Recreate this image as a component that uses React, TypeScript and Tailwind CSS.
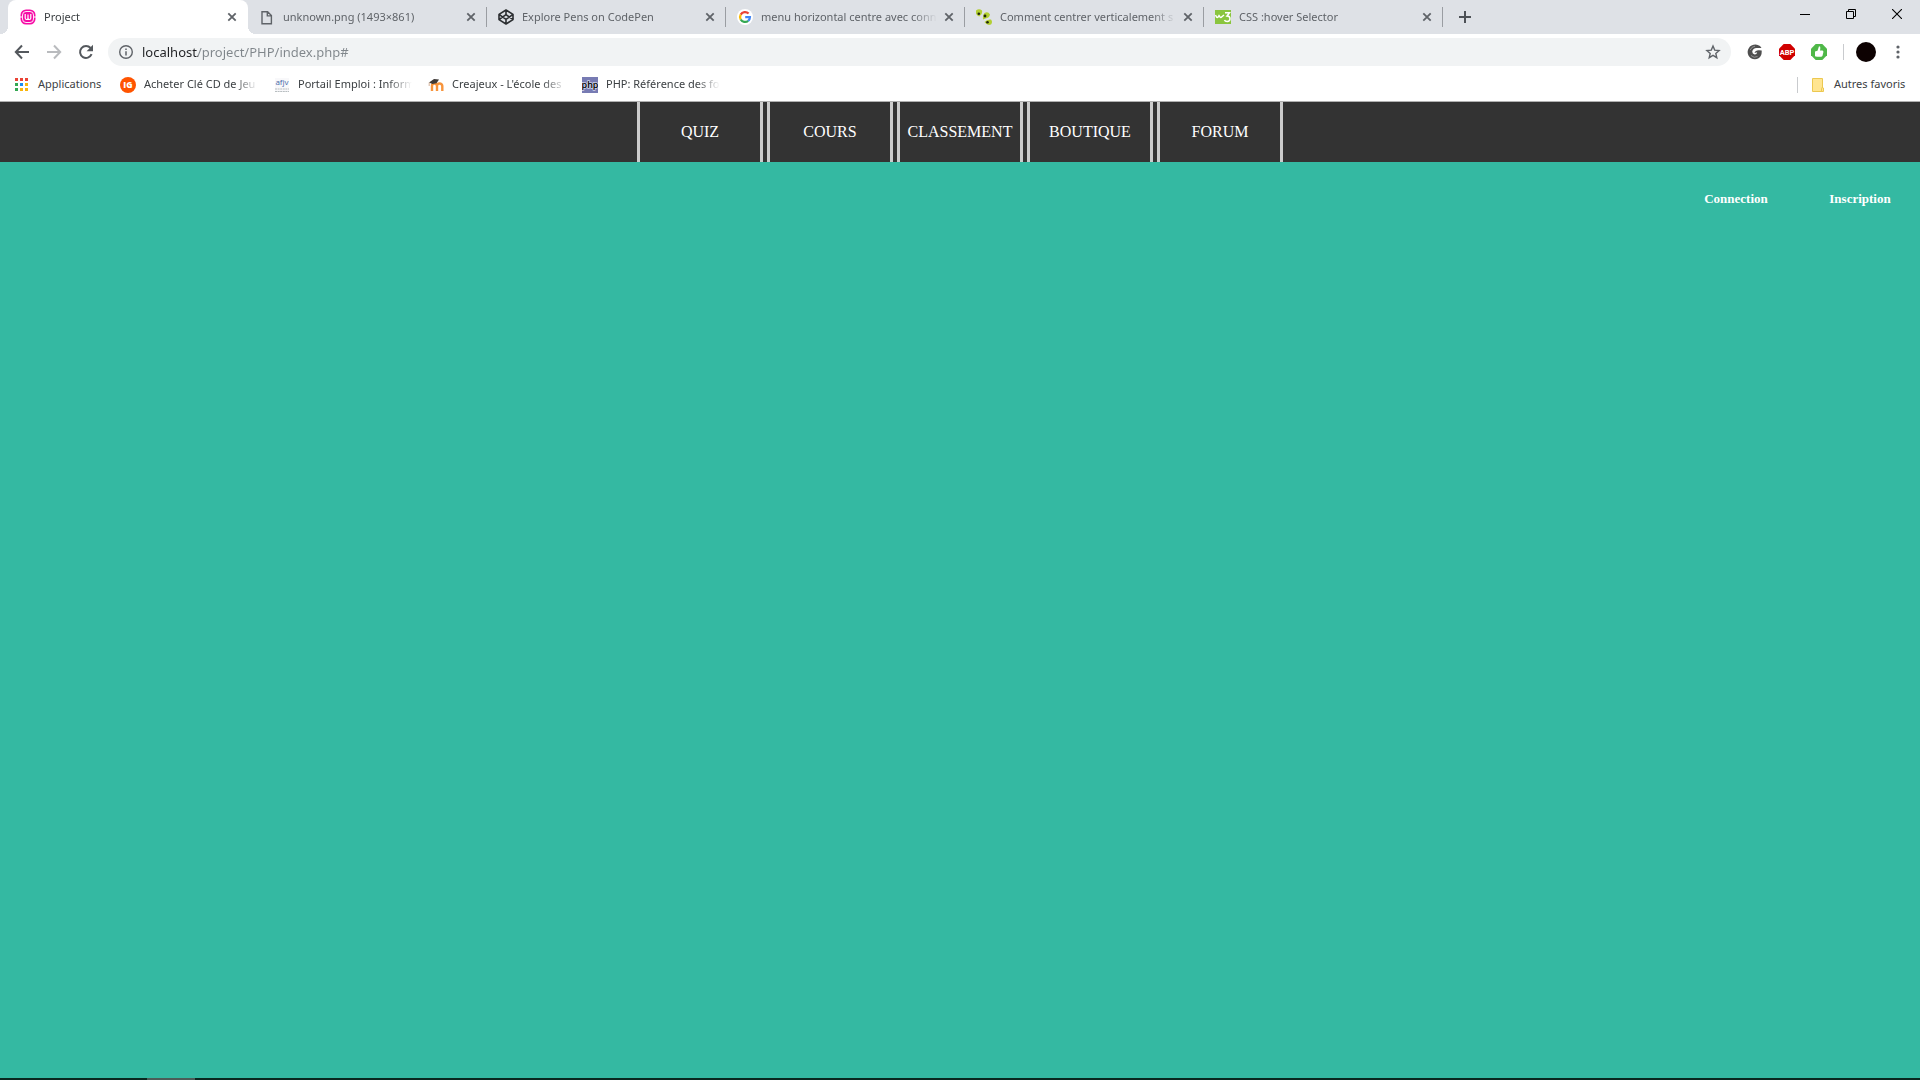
import React from "react";

type Icon = () => React.JSX.Element;

const WampIcon: Icon = () => (
  <svg viewBox="0 0 16 16" className="size-4" aria-hidden="true">
    <rect x="0.5" y="0.5" width="15" height="15" rx="5.5" fill="#f60ba6" />
    <rect x="2.500" y="2.500" width="11" height="11" rx="3.500" fill="none" stroke="#fff" strokeWidth="0.9" />
    <path d="M5.200 5v4q0 1.500 1.400 1.500Q8 10.500 8 9V5.500V9q0 1.500 1.400 1.500Q10.800 10.500 10.800 9V5" fill="none" stroke="#fff" strokeWidth="1.200" />
    <path d="M0 8h2M14 8h2" stroke="#fff" strokeWidth="1" />
  </svg>
);

const FileIcon: Icon = () => (
  <svg viewBox="0 0 16 16" className="size-4" aria-hidden="true">
    <path d="M3 2.700h5.600l3.800 3.900v8.200H3z M8.300 2.700v4.200h4.100" fill="none" stroke="#5f6368" strokeWidth="1.400" />
  </svg>
);

const CodePenIcon: Icon = () => (
  <svg viewBox="0 0 16 16" className="size-4" aria-hidden="true">
    <path d="M8 1l7 4.400v5.200L8 15l-7-4.400V5.400zM8 1v4.600M8 15v-4.600M1 5.400l7 5 7-5M1 10.600l7-5 7 5" fill="none" stroke="#2b2e31" strokeWidth="1.600" strokeLinejoin="round" />
  </svg>
);

const GoogleIcon: Icon = () => (
  <svg viewBox="0 0 16 16" className="size-4" aria-hidden="true">
    <circle cx="8" cy="8" r="8" fill="#fff" />
    <g fill="none" strokeWidth="2.300">
      <path d="M11.600 4.500A5 5 0 0 0 3.700 5.600" stroke="#ea4335" />
      <path d="M3.700 5.600a5 5 0 0 0 0 4.900" stroke="#fbbc05" />
      <path d="M3.700 10.500a5 5 0 0 0 7.500 1.300" stroke="#34a853" />
      <path d="M11.200 11.800A5 5 0 0 0 12.900 8.200H8.200" stroke="#4285f4" />
    </g>
  </svg>
);

const AlsacreationsIcon: Icon = () => (
  <svg viewBox="0 0 16 16" className="size-4" aria-hidden="true">
    <g fill="#b3cf32">
      <path d="M0 1.500Q3-1 6 1.500Q7 5 3.200 7.500Q-1 6 0 1.500z" />
      <path d="M8.500 4Q12 2 14 5.500Q13.500 9 9.500 9.500L7 10.500Q6.500 6 8.500 4z" />
      <path d="M8.500 13Q11 10 15 10.500Q17 13 15 15.500Q11 17 8.500 13z" />
    </g>
    <g fill="#20240c">
      <circle cx="2.800" cy="4.800" r="1.300" />
      <circle cx="9" cy="7" r="1.400" />
      <circle cx="11.500" cy="13.300" r="1.300" />
    </g>
  </svg>
);

const W3Icon: Icon = () => (
  <svg viewBox="0 0 16 16" className="size-4" aria-hidden="true">
    <rect y="1" width="16" height="14" fill="#8ac53e" />
    <path d="M0.500 6l1 2q.8 1 1.600 0L4 6.500l1 1.500q.8 1 1.600 0L9 6" fill="none" stroke="#fff" strokeWidth="1.400" />
    <path d="M10 3.700h4.500L12 7q3 0 3 2.700T12.200 12.500Q10 12.500 9.500 11" fill="none" stroke="#fff" strokeWidth="1.500" />
  </svg>
);

const InstantGamingIcon: Icon = () => (
  <svg viewBox="0 0 16 16" className="size-4" aria-hidden="true">
    <circle cx="8" cy="8" r="8" fill="#ff5400" />
    <text x="8" y="11" textAnchor="middle" fontSize="8.500" fontWeight="800" fontFamily="Open Sans, sans-serif" fill="#fff">IG</text>
  </svg>
);

const AfjvIcon: Icon = () => (
  <svg viewBox="0 0 16 16" className="size-4" aria-hidden="true">
    <rect x="1" y="1" width="14" height="14" fill="#f8f8fa" />
    <text x="8" y="7.500" textAnchor="middle" fontSize="8" fontFamily="Open Sans, sans-serif" fill="#4468a8">afjv</text>
    <path d="M1 12h14M1 14.500h14" stroke="#b8bec0" strokeWidth="1" strokeDasharray="2 .6" />
  </svg>
);

const MoodleIcon: Icon = () => (
  <svg viewBox="0 0 16 16" className="size-4" aria-hidden="true">
    <path d="M4 14V9q0-2.500 2.400-2.500T9 9v5M9 9q0-2.500 2.500-2.500T14.300 9v5" fill="none" stroke="#f7943c" strokeWidth="2.400" />
    <path d="M1 5.500L6 2l5 .6-2.500 3.600-4 .8z" fill="#3f3a38" />
    <path d="M1.200 5.500V9" stroke="#c9a080" strokeWidth="0.8" />
  </svg>
);

const PhpIcon: Icon = () => (
  <svg viewBox="0 0 16 16" className="size-4" aria-hidden="true">
    <rect width="16" height="16" fill="#777bb3" />
    <text x="8" y="11" textAnchor="middle" fontSize="9" fontWeight="600" fontFamily="Open Sans, sans-serif" fill="#000" stroke="#d4d6ea" strokeWidth="1.500" paintOrder="stroke">php</text>
  </svg>
);

const appColors = ["#ea4335", "#ea4335", "#ea4335", "#34a853", "#1a8cf0", "#f9b50b", "#34a853", "#f9b50b", "#f9b50b"];

const AppsIcon: Icon = () => (
  <svg viewBox="0 0 16 16" className="size-4" aria-hidden="true">
    {appColors.map((c, i) => (
      <rect key={i} x={1 + (i % 3) * 5} y={1 + Math.floor(i / 3) * 5} width="3" height="3" fill={c} />
    ))}
  </svg>
);

const FolderIcon: Icon = () => (
  <svg viewBox="0 0 16 16" className="size-4" aria-hidden="true">
    <path d="M2.500 1.500h10v9.500h1v3.500h-11z" fill="#ffe591" stroke="#ecc850" />
    <path d="M11.500 14.500V11.500q0-1 1-1" fill="none" stroke="#ecc850" />
  </svg>
);

const tabs: { title: string; icon: Icon }[] = [
  { title: "Project", icon: WampIcon },
  { title: "unknown.png (1493×861)", icon: FileIcon },
  { title: "Explore Pens on CodePen", icon: CodePenIcon },
  { title: "menu horizontal centre avec conn", icon: GoogleIcon },
  { title: "Comment centrer verticalement s", icon: AlsacreationsIcon },
  { title: "CSS :hover Selector", icon: W3Icon },
];

const bookmarks: { title: string; icon: Icon }[] = [
  { title: "Acheter Clé CD de Jeu", icon: InstantGamingIcon },
  { title: "Portail Emploi : Inform", icon: AfjvIcon },
  { title: "Creajeux - L'école des", icon: MoodleIcon },
  { title: "PHP: Référence des fo", icon: PhpIcon },
];

const menu = ["QUIZ", "COURS", "CLASSEMENT", "BOUTIQUE", "FORUM"];

function Tab({ title, icon: Glyph, active, divider }: { title: string; icon: Icon; active: boolean; divider: boolean }) {
  return (
    <div
      className={
        active
          ? "relative flex h-full w-60 min-w-0 items-center rounded-t-lg bg-white pr-2 pl-3 text-[#3c4043]"
          : "relative -ml-px flex h-full w-60 min-w-0 items-center pr-2 pl-3 text-[#5f6368]"
      }
    >
      {active && (
        <>
          <span className="absolute bottom-0 -left-2 size-2 bg-[radial-gradient(circle_at_0_0,#dee1e6_8px,#fff_8px)]" />
          <span className="absolute -right-2 bottom-0 size-2 bg-[radial-gradient(circle_at_100%_0,#dee1e6_8px,#fff_8px)]" />
        </>
      )}
      {divider && <span className="absolute top-[7px] left-0 h-5 w-px bg-[#9a9da2]" />}
      <button type="button" role="tab" aria-selected={active} className="flex min-w-0 flex-1 items-center gap-2 text-left">
        <span className="shrink-0"><Glyph /></span>
        <span className="flex-1 overflow-hidden whitespace-nowrap [mask-image:linear-gradient(to_right,#000_calc(100%-24px),transparent)]">
          {title}
        </span>
      </button>
      <button type="button" aria-label={`Fermer ${title}`} className="ml-1 size-4 shrink-0">
        <svg viewBox="0 0 16 16" className="size-4"><path d="M4.300 4.300l7.400 7.400M11.700 4.300l-7.400 7.400" stroke="#5f6368" strokeWidth="1.800" /></svg>
      </button>
    </div>
  );
}

function Browser() {
  return (
    <header className="border-b border-[#b0b0b0] bg-white font-['Noto_Sans','Open_Sans',sans-serif] text-[11px] text-[#3c4043]">
      <div className="flex h-[34px] items-start bg-[#dee1e6] pl-2">
        <div role="tablist" className="flex h-full min-w-0 items-center">
          {tabs.map((t, i) => (
            <Tab key={t.title} title={t.title} icon={t.icon} active={i === 0} divider={i > 1} />
          ))}
        </div>
        <span className="mt-[7px] -ml-px h-5 w-px shrink-0 bg-[#9a9da2]" />
        <button type="button" aria-label="Nouvel onglet" className="ml-2 flex h-full w-7 shrink-0 items-center justify-center">
          <svg viewBox="0 0 14 14" className="size-3.5"><path d="M7 1v12M1 7h12" stroke="#4d5156" strokeWidth="2" /></svg>
        </button>
        <div className="ml-auto flex">
          <button type="button" aria-label="Réduire" className="flex h-7 w-[46px] items-center justify-center">
            <svg viewBox="0 0 10 10" className="size-2.5"><path d="M0 5.500h10" stroke="#000" /></svg>
          </button>
          <button type="button" aria-label="Restaurer" className="flex h-7 w-[46px] items-center justify-center">
            <svg viewBox="0 0 10 10" className="size-2.5"><path d="M.5 2.500h7v7h-7zM2.500 2.500v-2h7v7h-2" fill="none" stroke="#000" /></svg>
          </button>
          <button type="button" aria-label="Fermer" className="flex h-7 w-[46px] items-center justify-center">
            <svg viewBox="0 0 10 10" className="size-2.5"><path d="M0 0l10 10M10 0L0 10" stroke="#000" strokeWidth="1.100" /></svg>
          </button>
        </div>
      </div>

      <div className="flex h-9 items-center px-2">
        <div className="flex gap-1">
          <button type="button" aria-label="Retour" className="flex size-7 items-center justify-center">
            <svg viewBox="0 0 16 16" className="size-4"><path d="M15 8H2.500M8 1.500L1.800 8 8 14.500" fill="none" stroke="#54585d" strokeWidth="2" /></svg>
          </button>
          <button type="button" aria-label="Avancer" className="flex size-7 items-center justify-center">
            <svg viewBox="0 0 16 16" className="size-4"><path d="M1 8h12.500M8 1.500L14.200 8 8 14.500" fill="none" stroke="#b9bbbe" strokeWidth="2" /></svg>
          </button>
          <button type="button" aria-label="Actualiser" className="flex size-7 items-center justify-center">
            <svg viewBox="0 0 16 16" className="size-4">
              <path d="M13.600 10.200A6 6 0 1 1 12.600 4" fill="none" stroke="#54585d" strokeWidth="2" />
              <path d="M15 .8v6.400H8.600z" fill="#54585d" />
            </svg>
          </button>
        </div>
        <div className="ml-2 flex h-7 min-w-0 flex-1 items-center rounded-full bg-[#f1f3f4] pr-2.5 pl-2.5">
          <button type="button" aria-label="Informations sur le site" className="size-4 shrink-0">
            <svg viewBox="0 0 16 16" className="size-4">
              <circle cx="8" cy="8" r="6.300" fill="none" stroke="#5f6368" strokeWidth="1.400" />
              <path d="M8 7.200v4.300M8 4.500v1.600" stroke="#5f6368" strokeWidth="1.500" />
            </svg>
          </button>
          <input
            type="text"
            aria-label="Adresse"
            defaultValue="localhost/project/PHP/index.php#"
            className="ml-2 min-w-0 flex-1 bg-[linear-gradient(90deg,#202124_56px,#80868b_56px)] bg-clip-text pt-0.5 text-[13px] text-transparent outline-none"
          />
          <button type="button" aria-label="Ajouter aux favoris" className="size-4 shrink-0">
            <svg viewBox="0 0 16 16" className="size-4">
              <path d="M8 2l1.700 4.100 4.400.4-3.300 2.900 1 4.300L8 11.400l-3.800 2.300 1-4.300L1.900 6.500l4.400-.4z" fill="none" stroke="#5f6368" strokeWidth="1.400" />
            </svg>
          </button>
        </div>
        <div className="ml-2 flex shrink-0">
          <button type="button" aria-label="Extension" className="flex h-7 w-8 items-center justify-center">
            <svg viewBox="0 0 16 16" className="size-4">
              <path d="M13 2Q9-.8 4.500 1.600A7.300 7.300 0 0 0 4 14.200Q8 16.600 12 14q3-2.400 2.700-7.500L12 6.200Q8.500 6 7.500 9l2.700-.7q-.4 2.300-2.500 2.200Q5 10 5.300 7.300 6 4.300 9.500 4h5z" fill="#4f4f4f" />
              <path d="M3.200 6Q4.500 2.600 8 2.200M4 11.500q3 3 6.500 1" fill="none" stroke="#a3a3a3" strokeWidth="0.800" />
            </svg>
          </button>
          <button type="button" aria-label="Adblock Plus" className="flex h-7 w-8 items-center justify-center">
            <svg viewBox="0 0 16 16" className="size-4">
              <path d="M4.700 0h6.600L16 4.700v6.600L11.300 16H4.700L0 11.300V4.700z" fill="#d00000" />
              <text x="8" y="10.800" textAnchor="middle" fontSize="7.500" fontWeight="700" fontFamily="Roboto, sans-serif" fill="#fff">ABP</text>
            </svg>
          </button>
          <button type="button" aria-label="Extension J'aime" className="flex h-7 w-8 items-center justify-center">
            <svg viewBox="0 0 16 16" className="size-4">
              <path d="M4.700 0h6.600L16 4.700v6.600L11.300 16H4.700L0 11.300V4.700z" fill="#4fb848" />
              <path d="M4 7.500l2.500-.7L8 2.300q1.800 0 1.300 2.400L9 6.500h2.500q1.300.6.800 2l-.8 3.300q-.3 1-1.500 1H6l-2-.6z" fill="#fff" />
            </svg>
          </button>
        </div>
        <span className="ml-2 h-4 w-px shrink-0 bg-[#c9cbce]" />
        <button type="button" aria-label="Profil" className="ml-3 size-5 shrink-0 rounded-full bg-[#0d0202]" />
        <button type="button" aria-label="Menu" className="ml-2 flex size-7 shrink-0 items-center justify-center">
          <svg viewBox="0 0 16 16" className="size-4" fill="#5f6368"><circle cx="8" cy="3" r="1.600" /><circle cx="8" cy="8" r="1.600" /><circle cx="8" cy="13" r="1.600" /></svg>
        </button>
      </div>

      <div className="flex h-[31px] items-center justify-between pr-3.5 pb-0.5 pl-3.5">
        <nav aria-label="Favoris" className="flex min-w-0 gap-4">
          <a href="#" className="flex items-center gap-2"><AppsIcon /><span className="min-w-[66px]">Applications</span></a>
          {bookmarks.map(({ title, icon: Glyph }) => (
            <a key={title} href="#" className="flex items-center gap-2">
              <Glyph />
              <span className="w-[114px] overflow-hidden whitespace-nowrap [mask-image:linear-gradient(to_right,#000_calc(100%-24px),transparent)]">{title}</span>
            </a>
          ))}
        </nav>
        <a href="#" className="flex shrink-0 items-center gap-2">
          <span className="mr-1 h-4 w-px bg-[#c9cbce]" />
          <FolderIcon />
          <span className="min-w-[72px]">Autres favoris</span>
        </a>
      </div>
    </header>
  );
}

export default function App() {
  return (
    <div className="flex min-h-screen flex-col bg-[#34b9a2]">
      <Browser />
      <main className="flex-1 font-['Liberation_Serif',serif] text-white">
        <nav aria-label="Menu principal" className="bg-[#333]">
          <ul className="flex justify-center gap-1">
            {menu.map((item) => (
              <li key={item}>
                <a href="#" className="flex h-[60px] w-[126px] items-center justify-center border-x-3 border-[#ccc] text-base">{item}</a>
              </li>
            ))}
          </ul>
        </nav>
        <div className="flex justify-end gap-1 pt-[29px] text-[13px] leading-4 font-bold">
          <a href="#" className="w-[120px] text-center">Connection</a>
          <a href="#" className="w-[120px] text-center">Inscription</a>
        </div>
      </main>
      <footer className="flex h-0.5 bg-[#09271f]">
        <span className="ml-[147px] w-12 bg-[#4b5d58]" />
      </footer>
    </div>
  );
}
